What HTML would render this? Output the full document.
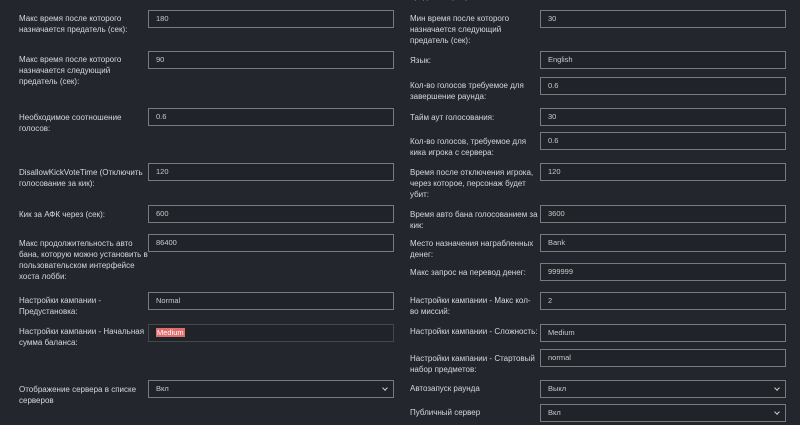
<!DOCTYPE html>
<html><head><meta charset="utf-8"><style>
html,body{margin:0;padding:0;background:#23262c;width:800px;height:425px;overflow:hidden;position:relative;font-family:"Liberation Sans","DejaVu Sans",sans-serif;}
.l{position:absolute;color:#d6d8db;font-size:8px;line-height:11px;width:125px;}
.i{position:absolute;box-sizing:border-box;height:18px;border:1px solid #777a7f;background:#202328;color:#c8cacd;font-size:7.5px;line-height:16px;padding-left:7px;}
.L{left:148px;width:246px}
.R{left:540px;width:246px}
.s::after{content:"";position:absolute;right:6px;top:5px;width:3px;height:3px;border-right:1.3px solid #ccc;border-bottom:1.3px solid #ccc;transform:rotate(45deg);}
.hl{background:#e06c6c;color:#fff;padding:0 1px;}
</style></head><body>
<div class="l" style="left:19px;top:13px">Макс время после которого назначается предатель (сек):</div>
<div class="i L" style="top:10px">180</div>
<div class="l" style="left:19px;top:54px">Макс время после которого назначается следующий предатель (сек):</div>
<div class="i L" style="top:51px">90</div>
<div class="l" style="left:19px;top:112px">Необходимое соотношение голосов:</div>
<div class="i L" style="top:108px">0.6</div>
<div class="l" style="left:19px;top:167px;width:130px">DisallowKickVoteTime (Отключить голосование за кик):</div>
<div class="i L" style="top:163px">120</div>
<div class="l" style="left:19px;top:209px">Кик за АФК через (сек):</div>
<div class="i L" style="top:205px">600</div>
<div class="l" style="left:19px;top:238px;width:130px">Макс продолжительность авто бана, которую можно установить в пользовательском интерфейсе хоста лобби:</div>
<div class="i L" style="top:234px">86400</div>
<div class="l" style="left:19px;top:295px">Настройки кампании - Предустановка:</div>
<div class="i L" style="top:292px">Normal</div>
<div class="l" style="left:19px;top:326px;width:130px">Настройки кампании - Начальная сумма баланса:</div>
<div class="i L" style="top:324px;border-color:#44474c"><span class="hl">Medium</span></div>
<div class="l" style="left:19px;top:384px">Отображение сервера в списке серверов</div>
<div class="i L s" style="top:380px">Вкл</div>

<div class="l" style="left:410px;top:-9px">предатель (сек):</div>
<div class="l" style="left:410px;top:13px">Мин время после которого назначается следующий предатель (сек):</div>
<div class="i R" style="top:10px">30</div>
<div class="l" style="left:410px;top:55px">Язык:</div>
<div class="i R" style="top:51px">English</div>
<div class="l" style="left:410px;top:80px">Кол-во голосов требуемое для завершение раунда:</div>
<div class="i R" style="top:77px">0.6</div>
<div class="l" style="left:410px;top:112px">Тайм аут голосования:</div>
<div class="i R" style="top:108px">30</div>
<div class="l" style="left:410px;top:136px">Кол-во голосов, требуемое для кика игрока с сервера:</div>
<div class="i R" style="top:132px">0.6</div>
<div class="l" style="left:410px;top:167px">Время после отключения игрока, через которое, персонаж будет убит:</div>
<div class="i R" style="top:163px">120</div>
<div class="l" style="left:410px;top:209px;width:128px">Время авто бана голосованием за кик:</div>
<div class="i R" style="top:205px">3600</div>
<div class="l" style="left:410px;top:238px">Место назначения награбленных денег:</div>
<div class="i R" style="top:234px">Bank</div>
<div class="l" style="left:410px;top:267px;width:130px">Макс запрос на перевод денег:</div>
<div class="i R" style="top:263px">999999</div>
<div class="l" style="left:410px;top:295px">Настройки кампании - Макс кол-во миссий:</div>
<div class="i R" style="top:292px">2</div>
<div class="l" style="left:410px;top:326px;width:130px">Настройки кампании - Сложность:</div>
<div class="i R" style="top:324px">Medium</div>
<div class="l" style="left:410px;top:353px">Настройки кампании - Стартовый набор предметов:</div>
<div class="i R" style="top:349px">normal</div>
<div class="l" style="left:410px;top:383px">Автозапуск раунда</div>
<div class="i R s" style="top:380px">Выкл</div>
<div class="l" style="left:410px;top:407px">Публичный сервер</div>
<div class="i R s" style="top:404px">Вкл</div>
</body></html>
